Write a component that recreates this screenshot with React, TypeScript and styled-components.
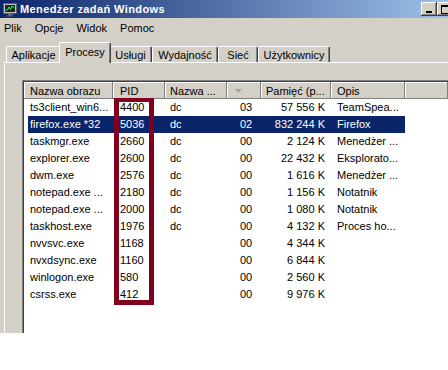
import React from "react";
import styled, { createGlobalStyle } from "styled-components";

const FACE = "#d4d0c8";
const SHADOW = "#808080";
const DARK = "#404040";
const SELECT = "#0a246a";

const GlobalStyle = createGlobalStyle`
  html, body {
    margin: 0;
    padding: 0;
    background: #fff;
    overflow: hidden;
  }
  body {
    font-family: "Liberation Sans", Arial, sans-serif;
    font-size: 11px;
    color: #000;
  }
`;

const Window = styled.div`
  width: 448px;
  height: 333px;
  background: ${FACE};
  overflow: hidden;
  display: flex;
  flex-direction: column;
`;

const TitleBar = styled.div`
  flex: 0 0 18px;
  width: 474px;
  display: flex;
  align-items: center;
  background: linear-gradient(to right, #0a246a, #a6caf0);
  color: #fff;
`;

const TitleText = styled.span`
  margin-left: 2px;
  font-weight: bold;
  letter-spacing: 0.4px;
  flex: 1;
  white-space: nowrap;
`;

const TitleButton = styled.div<{ $gap?: number }>`
  width: 16px;
  height: 14px;
  margin-right: ${p => p.$gap ?? 0}px;
  background: ${FACE};
  box-shadow: inset -1px -1px ${DARK}, inset 1px 1px #fff,
    inset -2px -2px ${SHADOW}, inset 2px 2px ${FACE};
  display: flex;
  align-items: center;
  justify-content: center;
`;

const MenuBar = styled.div`
  flex: 0 0 19px;
  display: flex;
  align-items: center;
  gap: 13px;
  padding-left: 4px;
`;

const TabArea = styled.div`
  flex: 1;
  display: flex;
  flex-direction: column;
  margin-top: 5px;
  padding-left: 4px;
`;

const TabStrip = styled.div`
  flex: 0 0 20px;
  display: flex;
  align-items: flex-end;
  padding-left: 2px;
`;

const Tab = styled.div<{ $w: number; $active?: boolean }>`
  position: relative;
  z-index: ${p => (p.$active ? 1 : 0)};
  box-sizing: border-box;
  width: ${p => p.$w + (p.$active ? 4 : 0)}px;
  height: ${p => (p.$active ? 21 : 16)}px;
  margin: ${p => (p.$active ? "0 -2px -1px" : "0")};
  padding-top: ${p => (p.$active ? 3 : 2)}px;
  line-height: 13px;
  text-align: center;
  white-space: nowrap;
  background: ${FACE};
  border-top: 1px solid #fff;
  border-left: 1px solid #fff;
  border-right: 1px solid ${DARK};
  border-radius: 2px 2px 0 0;
  box-shadow: inset -1px 0 ${SHADOW};
`;

const Panel = styled.div`
  flex: 1;
  display: flex;
  flex-direction: column;
  border-top: 1px solid #fff;
  border-left: 1px solid #fff;
  padding: 17px 0 0 17px;
`;

const ListView = styled.div`
  flex: 1;
  display: flex;
  flex-direction: column;
  border-top: 1px solid ${SHADOW};
  border-left: 1px solid ${SHADOW};
`;

const ListFrame = styled.div`
  position: relative;
  flex: 1;
  background: #fff;
  border-top: 1px solid ${DARK};
  border-left: 1px solid ${DARK};
`;

const Header = styled.div`
  display: grid;
  grid-template-columns: 89px 52px 62px 34px 70px 74px 1fr;
  height: 17px;
  background: ${FACE};
`;

const HeadCell = styled.div<{ $pad: number }>`
  display: flex;
  align-items: center;
  padding-left: ${p => p.$pad}px;
  white-space: nowrap;
  overflow: hidden;
  box-shadow: inset -1px -1px ${SHADOW}, inset 1px 1px #fff;
`;

const Row = styled.div<{ $selected?: boolean }>`
  display: grid;
  grid-template-columns: 85px 52px 62px 34px 70px 74px;
  box-sizing: border-box;
  width: 381px;
  height: 17px;
  line-height: 17px;
  padding-left: 4px;
  background: ${p => (p.$selected ? SELECT : "transparent")};
  background-clip: content-box;
  color: ${p => (p.$selected ? "#fff" : "#000")};
`;

const Cell = styled.div<{ $pad?: number; $right?: boolean }>`
  white-space: nowrap;
  overflow: hidden;
  text-align: ${p => (p.$right ? "right" : "left")};
  padding-left: ${p => (p.$right ? 0 : p.$pad ?? 0)}px;
  padding-right: ${p => (p.$right ? p.$pad ?? 0 : 0)}px;
`;

const Marker = styled.div`
  position: absolute;
  z-index: 2;
  left: 90px;
  top: 16px;
  width: 40px;
  height: 207px;
  box-sizing: border-box;
  border: 5px solid #80001e;
  border-top-width: 4px;
`;

const AppIcon = () => (
  <svg width="16" height="16" viewBox="0 0 16 16" style={{ marginLeft: 2 }}>
    <rect x="1.5" y="2.5" width="13" height="10" fill="#c0c0c0" stroke="#606060" />
    <rect x="3" y="4" width="10" height="7" fill="#0c2a2a" />
    <polyline points="3.5,9 5.5,9 7,6 8.5,8.5 10,5 12.5,7" fill="none" stroke="#3cff3c" strokeWidth="1" />
    <rect x="6" y="13" width="4" height="1.5" fill="#808080" />
    <rect x="4" y="14.5" width="8" height="1" fill="#606060" />
  </svg>
);

const MinGlyph = () => (
  <svg width="8" height="8" viewBox="0 0 8 8" style={{ marginTop: 2 }}>
    <rect x="1" y="5" width="6" height="2" fill="#000" />
  </svg>
);

const MaxGlyph = () => (
  <svg width="9" height="9" viewBox="0 0 9 9">
    <rect x="0.5" y="0.5" width="8" height="8" fill="none" stroke="#000" />
    <rect x="0" y="1" width="9" height="1" fill="#000" />
  </svg>
);

const CloseGlyph = () => (
  <svg width="8" height="7" viewBox="0 0 8 7">
    <path d="M0.5 0.5 L7.5 6.5 M7.5 0.5 L0.5 6.5" stroke="#000" strokeWidth="1.5" />
  </svg>
);

const SortArrow = () => (
  <svg width="7" height="4" viewBox="0 0 7 4">
    <polygon points="0,0 7,0 3.5,4" fill="#a0a0a0" />
  </svg>
);

const tabs = [
  { label: "Aplikacje", w: 55 },
  { label: "Procesy", w: 48, active: true },
  { label: "Usługi", w: 43 },
  { label: "Wydajność", w: 66 },
  { label: "Sieć", w: 40 },
  { label: "Użytkownicy", w: 72 },
];

const processes = [
  { name: "ts3client_win6...", pid: "4400", user: "dc", session: "03", mem: "57 556 K", desc: "TeamSpea..." },
  { name: "firefox.exe *32", pid: "5036", user: "dc", session: "02", mem: "832 244 K", desc: "Firefox", selected: true },
  { name: "taskmgr.exe", pid: "2660", user: "dc", session: "00", mem: "2 124 K", desc: "Menedżer ..." },
  { name: "explorer.exe", pid: "2600", user: "dc", session: "00", mem: "22 432 K", desc: "Eksplorato..." },
  { name: "dwm.exe", pid: "2576", user: "dc", session: "00", mem: "1 616 K", desc: "Menedżer ..." },
  { name: "notepad.exe ...", pid: "2180", user: "dc", session: "00", mem: "1 156 K", desc: "Notatnik" },
  { name: "notepad.exe ...", pid: "2000", user: "dc", session: "00", mem: "1 080 K", desc: "Notatnik" },
  { name: "taskhost.exe", pid: "1976", user: "dc", session: "00", mem: "4 132 K", desc: "Proces ho..." },
  { name: "nvvsvc.exe", pid: "1168", user: "", session: "00", mem: "4 344 K", desc: "" },
  { name: "nvxdsync.exe", pid: "1160", user: "", session: "00", mem: "6 844 K", desc: "" },
  { name: "winlogon.exe", pid: "580", user: "", session: "00", mem: "2 560 K", desc: "" },
  { name: "csrss.exe", pid: "412", user: "", session: "00", mem: "9 976 K", desc: "" },
];

const App: React.FC = () => (
  <>
    <GlobalStyle />
    <Window>
      <TitleBar>
        <AppIcon />
        <TitleText>Menedżer zadań Windows</TitleText>
        <TitleButton><MinGlyph /></TitleButton>
        <TitleButton $gap={2}><MaxGlyph /></TitleButton>
        <TitleButton $gap={3}><CloseGlyph /></TitleButton>
      </TitleBar>
      <MenuBar>
        <span>Plik</span>
        <span>Opcje</span>
        <span>Widok</span>
        <span>Pomoc</span>
      </MenuBar>
      <TabArea>
        <TabStrip>
          {tabs.map(t => (
            <Tab key={t.label} $w={t.w} $active={t.active}>
              {t.label}
            </Tab>
          ))}
        </TabStrip>
        <Panel>
          <ListView>
            <ListFrame>
              <Header>
                <HeadCell $pad={6}>Nazwa obrazu</HeadCell>
                <HeadCell $pad={7}>PID</HeadCell>
                <HeadCell $pad={5}>Nazwa ...</HeadCell>
                <HeadCell $pad={8}><SortArrow /></HeadCell>
                <HeadCell $pad={5}>Pamięć (p...</HeadCell>
                <HeadCell $pad={6}>Opis</HeadCell>
                <HeadCell $pad={6} />
              </Header>
              {processes.map(p => (
                <Row key={p.pid} $selected={p.selected}>
                  <Cell $pad={2}>{p.name}</Cell>
                  <Cell $pad={7}>{p.pid}</Cell>
                  <Cell $pad={5}>{p.user}</Cell>
                  <Cell $pad={13}>{p.session}</Cell>
                  <Cell $right $pad={6}>{p.mem}</Cell>
                  <Cell $pad={6}>{p.desc}</Cell>
                </Row>
              ))}
              <Marker />
            </ListFrame>
          </ListView>
        </Panel>
      </TabArea>
    </Window>
  </>
);

export default App;
